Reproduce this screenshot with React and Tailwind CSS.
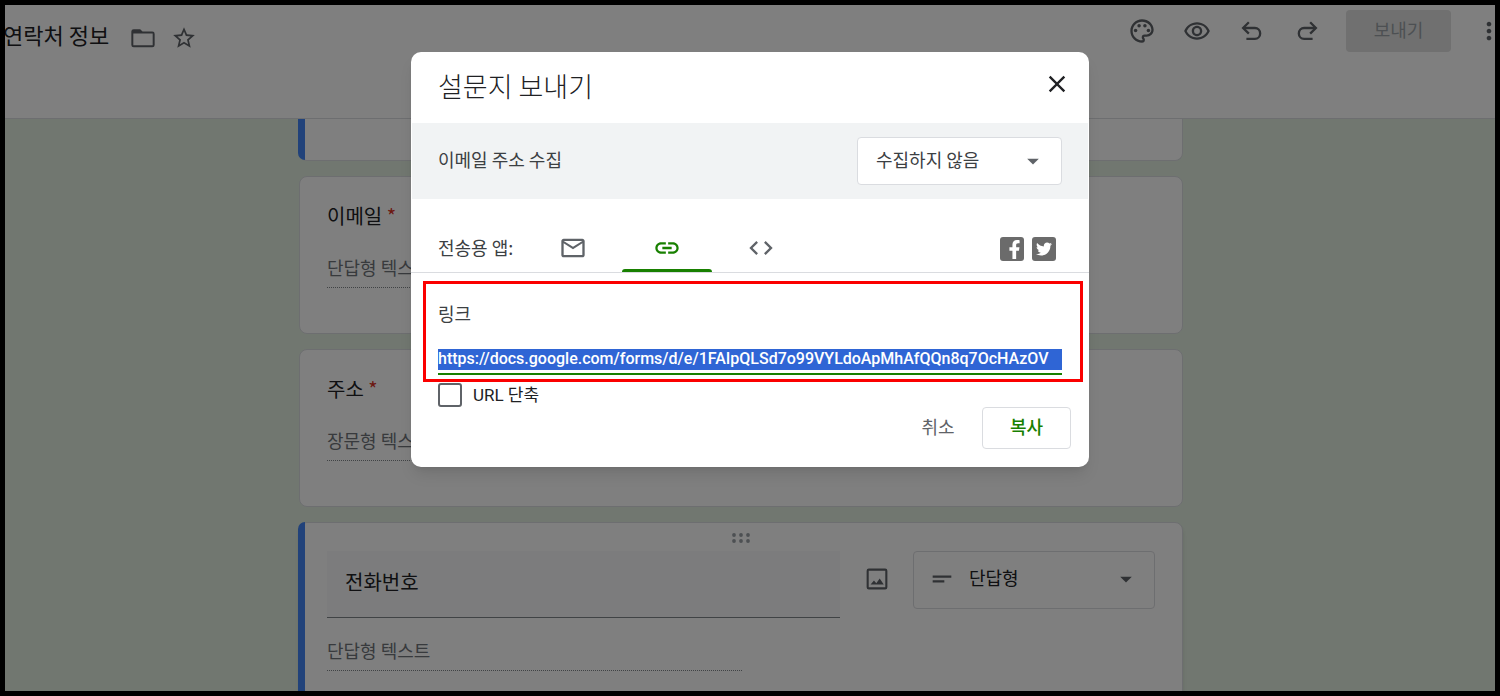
import React from "react";
import {
  MdOutlinePalette,
  MdOutlineRemoveRedEye,
  MdMoreVert,
  MdStarBorder,
  MdClose,
  MdMailOutline,
  MdLink,
  MdCode,
  MdShortText,
  MdArrowDropDown,
} from "react-icons/md";
import { FaFacebookF, FaTwitter } from "react-icons/fa";

const FORM_URL =
  "https://docs.google.com/forms/d/e/1FAIpQLSd7o99VYLdoApMhAfQQn8q7OcHAzOV";

function FolderIcon() {
  return (
    <svg viewBox="0 0 24 24" className="size-7" fill="currentColor" aria-hidden="true">
      <path
        fillRule="evenodd"
        d="M4 4.500h5.600l2 2H20a2 2 0 0 1 2 2v9.500a2 2 0 0 1-2 2H4a2 2 0 0 1-2-2V6.500a2 2 0 0 1 2-2zM3.700 8.100v10.200h16.600V8.100z"
      />
    </svg>
  );
}

function UndoIcon({ flip }) {
  return (
    <svg
      viewBox="0 0 24 24"
      className={flip ? "size-7 -scale-x-100" : "size-7"}
      fill="none"
      stroke="currentColor"
      strokeWidth="2"
      aria-hidden="true"
    >
      <path d="M7.200 18.700h7.300c2.500 0 4.500-2 4.500-4.600s-2-4.700-4.500-4.700H5.500" />
      <path d="M9.300 4.500L4.400 9.400l4.900 4.900" />
    </svg>
  );
}

function ImageIcon() {
  return (
    <svg viewBox="0 0 24 24" className="size-7" aria-hidden="true">
      <rect x="4" y="4" width="16" height="16" rx="1" fill="none" stroke="currentColor" strokeWidth="1.800" />
      <path fill="currentColor" d="M6.500 16.800l2.900-3.600 2 2.400 2.900-4 3.500 5.200z" />
    </svg>
  );
}

function DragDots() {
  return (
    <svg viewBox="0 0 18 10" className="h-2.5 w-[18px]" fill="#9aa0a6" aria-hidden="true">
      {[2, 9, 16].map((x) => (
        <g key={x}>
          <circle cx={x} cy="2" r="1.900" />
          <circle cx={x} cy="8" r="1.900" />
        </g>
      ))}
    </svg>
  );
}

function IconButton({ label, children }) {
  return (
    <button type="button" aria-label={label} className="flex h-[42px] w-[55px] items-center justify-center">
      {children}
    </button>
  );
}

function Header() {
  return (
    <header className="flex h-[114px] shrink-0 items-start justify-between border-b border-[#dadce0] bg-white text-[#5f6368]">
      <div className="-ml-0.5 flex items-start pt-2">
        <h1 className="text-[22px] leading-[42px] text-[#202124]">연락처 정보</h1>
        <button type="button" aria-label="폴더로 이동" className="ml-5 flex h-[50px] items-center">
          <FolderIcon />
        </button>
        <button type="button" aria-label="별표" className="ml-3.5 flex h-[50px] items-center">
          <MdStarBorder size={26} />
        </button>
      </div>
      <div className="flex items-center pt-[5px]">
        <IconButton label="테마 맞춤설정">
          <MdOutlinePalette size={28} />
        </IconButton>
        <IconButton label="미리보기">
          <MdOutlineRemoveRedEye size={28} />
        </IconButton>
        <IconButton label="실행취소">
          <UndoIcon />
        </IconButton>
        <IconButton label="다시 실행">
          <UndoIcon flip />
        </IconButton>
        <button type="button" className="ml-3 h-[42px] w-[105px] rounded-[4px] bg-[#e0e0e0] pb-1 text-[18px] text-[#9aa0a6]">
          보내기
        </button>
        <button type="button" aria-label="더보기" className="-mr-2 ml-6 shrink-0">
          <MdMoreVert size={28} />
        </button>
      </div>
    </header>
  );
}

function AnswerLine({ children }) {
  return (
    <p className="w-[415px] max-w-full border-b border-dotted border-[#80868b] pb-2 text-[18px] leading-6 text-[#70757a]">
      {children}
    </p>
  );
}

function QuestionCard({ title, hint }) {
  return (
    <section className="h-[158px] rounded-lg border border-[#dadce0] bg-white px-[27px] pt-[25px]">
      <h2 className="mb-[25px] text-[20px] leading-7 text-[#202124]">
        {title} <span className="text-[20px] text-[#d93025]">*</span>
      </h2>
      <AnswerLine>{hint}</AnswerLine>
    </section>
  );
}

function ActiveCard() {
  return (
    <section className="relative h-[240px] rounded-lg border border-[#dadce0] bg-white px-[27px] pt-2.5 shadow-md">
      <span className="absolute -top-px bottom-0 -left-0.5 w-[7px] rounded-l-lg bg-[#4285f4]" />
      <div className="flex h-[18px] justify-center">
        <DragDots />
      </div>
      <div className="flex items-start">
        <input
          aria-label="질문"
          defaultValue="전화번호"
          className="h-[67px] min-w-0 flex-1 border-b border-[#80868b] bg-[#f8f9fa] px-[18px] pb-1.5 text-[20px] text-[#202124]"
        />
        <button type="button" aria-label="이미지 추가" className="flex h-14 w-[73px] items-center justify-center text-[#5f6368]">
          <ImageIcon />
        </button>
        <div className="relative w-[242px] text-[#5f6368]">
          <select
            aria-label="질문 유형"
            className="h-[58px] w-full appearance-none rounded-[4px] border border-[#dadce0] bg-white pr-12 pb-1.5 pl-[55px] text-[18px] text-[#202124]"
          >
            <option>단답형</option>
          </select>
          <MdShortText size={28} className="pointer-events-none absolute top-3.5 left-[15px]" />
          <MdArrowDropDown size={28} className="pointer-events-none absolute top-3.5 right-[15px]" />
        </div>
      </div>
      <div className="mt-5">
        <AnswerLine>단답형 텍스트</AnswerLine>
      </div>
    </section>
  );
}

function Tab({ label, active, children }) {
  return (
    <button
      type="button"
      role="tab"
      aria-selected={!!active}
      aria-label={label}
      className={
        active
          ? "relative flex w-[90px] items-center justify-center text-[#188000]"
          : "relative flex w-[90px] items-center justify-center text-[#5f6368]"
      }
    >
      {children}
      {active && <span className="absolute inset-x-0 bottom-0 h-[3px] rounded-t-[3px] bg-[#188000]" />}
    </button>
  );
}

function SendDialog() {
  return (
    <div
      role="dialog"
      aria-labelledby="send-title"
      className="w-[678px] max-w-full rounded-[10px] bg-white text-[18px] text-[#3c4043] shadow-lg"
    >
      <div className="flex h-[71px] items-center justify-between pr-[18px] pb-1 pl-[27px]">
        <h2 id="send-title" className="text-[27px] leading-9 font-light text-[#202124]">
          설문지 보내기
        </h2>
        <button type="button" aria-label="닫기" className="mb-1 text-[#202124]">
          <MdClose size={28} />
        </button>
      </div>

      <div className="mx-px flex h-[76px] items-center justify-between bg-[#f1f3f4] px-[26px]">
        <label htmlFor="collect" className="pb-1">
          이메일 주소 수집
        </label>
        <div className="relative w-[205px]">
          <select
            id="collect"
            className="h-12 w-full appearance-none rounded-[4px] border border-[#dadce0] bg-white pr-10 pb-1 pl-[18px]"
          >
            <option>수집하지 않음</option>
          </select>
          <MdArrowDropDown size={28} className="pointer-events-none absolute top-2.5 right-[15px] text-[#5f6368]" />
        </div>
      </div>

      <div className="flex h-[74px] border-b border-[#dadce0] px-[27px] pt-[25px]">
        <span className="w-[90px] leading-[46px]">전송용 앱:</span>
        <div role="tablist" className="flex flex-1 gap-1">
          <Tab label="이메일">
            <MdMailOutline size={28} />
          </Tab>
          <Tab label="링크" active>
            <MdLink size={28} />
          </Tab>
          <Tab label="HTML 삽입">
            <MdCode size={28} />
          </Tab>
        </div>
        <div className="mr-1.5 flex items-center gap-2 pt-0.5">
          <a href="#facebook" aria-label="Facebook" className="flex size-6 items-end justify-end rounded-[3px] bg-[#6b6b6b] pb-0.5 text-white">
            <FaFacebookF size={19} />
          </a>
          <a href="#twitter" aria-label="Twitter" className="flex size-6 items-center justify-center rounded-[3px] bg-[#6b6b6b] text-white">
            <FaTwitter size={16} />
          </a>
        </div>
      </div>

      <div className="relative px-[27px] pt-7">
        <label htmlFor="link" className="block leading-6">
          링크
        </label>
        <div className="mt-6 border-b-2 border-[#188000] pb-[3px]">
          <input
            id="link"
            readOnly
            value={FORM_URL}
            className="block h-[21px] w-full bg-[#2f65d5] pb-0.5 font-['Roboto','Noto_Sans_CJK_KR',sans-serif] text-[16px] leading-5 font-medium text-white"
          />
        </div>
        <span className="pointer-events-none absolute top-2 right-1.5 -bottom-[7px] left-3 border-3 border-[#fb0000]" />
      </div>

      <div className="mt-2 flex items-center px-[27px]">
        <input
          id="shorten"
          type="checkbox"
          className="size-6 appearance-none rounded-[3px] border-2 border-[#5f6368] bg-white"
        />
        <label htmlFor="shorten" className="pl-[11px] font-['Roboto','Noto_Sans_CJK_KR',sans-serif] text-[17px] leading-6 text-[#202124]">
          URL 단축
        </label>
      </div>

      <div className="flex justify-end px-[18px] pb-[18px]">
        <button type="button" className="h-[42px] w-[88px] pb-1 text-[#5f6368]">
          취소
        </button>
        <button type="button" className="h-[42px] w-[89px] rounded-[4px] border border-[#dadce0] pb-1 font-medium text-[#188000]">
          복사
        </button>
      </div>
    </div>
  );
}

export default function App() {
  return (
    <div className="relative flex h-screen flex-col overflow-hidden border-5 border-black bg-[#e3efe1] font-['Noto_Sans_CJK_KR',sans-serif]">
      <Header />
      <main className="flex-1 overflow-hidden pr-[18px]">
        <div className="mx-auto flex max-w-[884px] flex-col gap-[15px]">
          <section className="relative h-[42px] rounded-b-lg border border-t-0 border-[#dadce0] bg-white">
            <span className="absolute inset-y-0 -left-0.5 w-[7px] rounded-bl-lg bg-[#4285f4]" />
          </section>
          <QuestionCard title="이메일" hint="단답형 텍스트" />
          <QuestionCard title="주소" hint="장문형 텍스트" />
          <ActiveCard />
        </div>
      </main>
      <div className="absolute inset-0 flex items-start justify-center bg-black/50 pt-[47px]">
        <SendDialog />
      </div>
    </div>
  );
}
